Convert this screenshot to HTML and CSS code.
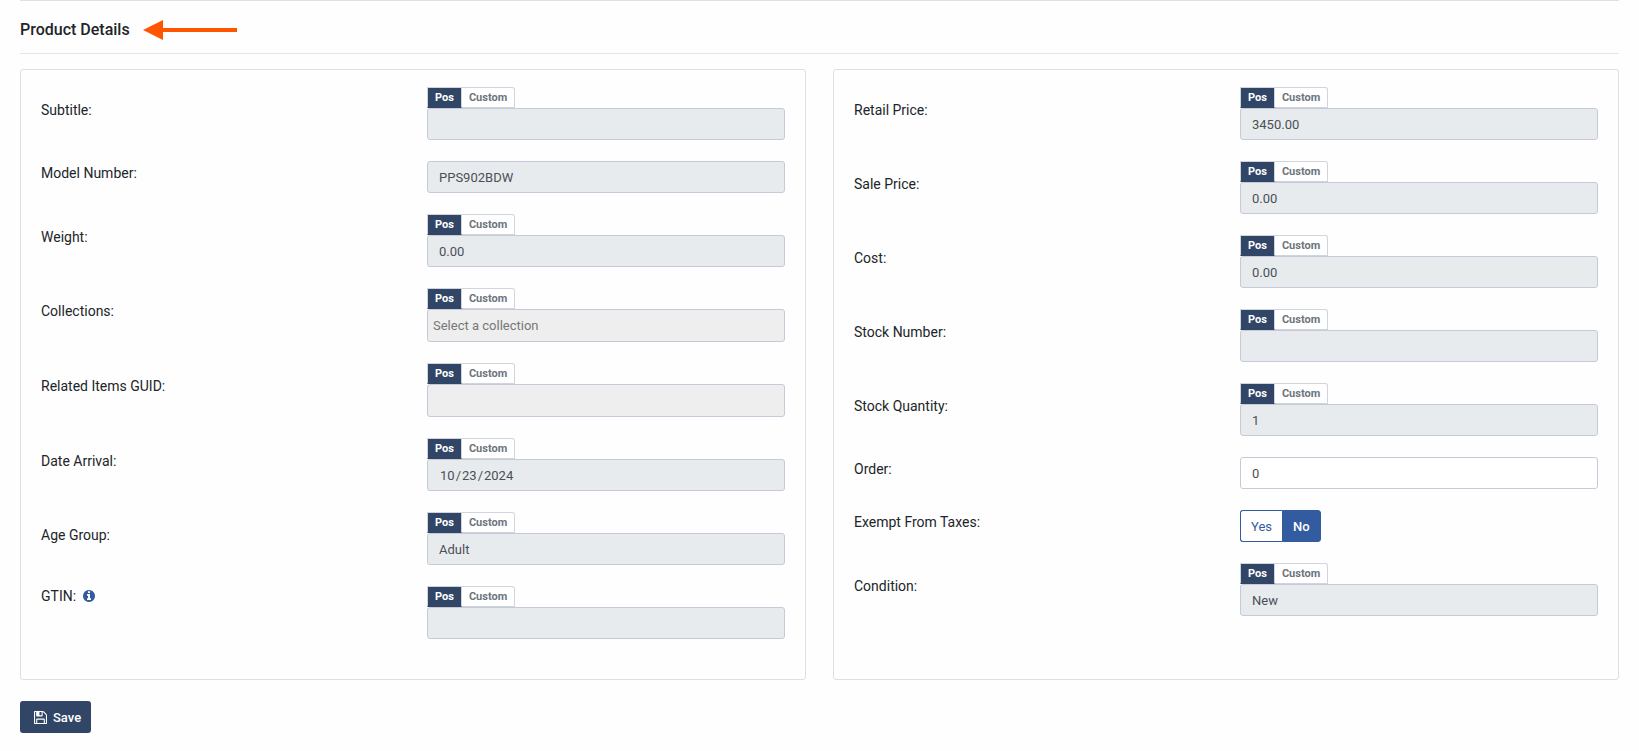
FILE: index.html
```html
<!DOCTYPE html>
<html lang="en-US">
<head>
<meta charset="utf-8">
<meta name="viewport" content="width=device-width, initial-scale=1">
<title>Product Details</title>
<link rel="stylesheet" href="styles.css">
</head>
<body>
<main class="page">
  <header class="section-head">
    <h1 class="section-title">Product Details</h1>
    <svg class="arrow" width="94" height="20" viewBox="0 0 94 20" aria-hidden="true"><path d="M0 10 20 0v8h74v4H20v8z" fill="#ff5500"/></svg>
  </header>

  <form class="details">
    <div class="columns">
      <section class="card">
        <div class="field">
          <label class="label" for="subtitle">Subtitle:</label>
          <div class="control">
            <div class="source"><button type="button" class="tab tab-on">Pos</button><button type="button" class="tab">Custom</button></div>
            <input class="input" id="subtitle" type="text" readonly>
          </div>
        </div>
        <div class="field">
          <label class="label" for="model">Model Number:</label>
          <div class="control">
            <input class="input" id="model" type="text" value="PPS902BDW" readonly>
          </div>
        </div>
        <div class="field">
          <label class="label" for="weight">Weight:</label>
          <div class="control">
            <div class="source"><button type="button" class="tab tab-on">Pos</button><button type="button" class="tab">Custom</button></div>
            <input class="input" id="weight" type="text" value="0.00" readonly>
          </div>
        </div>
        <div class="field">
          <label class="label" for="collections">Collections:</label>
          <div class="control">
            <div class="source"><button type="button" class="tab tab-on">Pos</button><button type="button" class="tab">Custom</button></div>
            <input class="input input-picker" id="collections" type="text" placeholder="Select a collection" readonly>
          </div>
        </div>
        <div class="field">
          <label class="label" for="related">Related Items GUID:</label>
          <div class="control">
            <div class="source"><button type="button" class="tab tab-on">Pos</button><button type="button" class="tab">Custom</button></div>
            <input class="input input-picker" id="related" type="text" readonly>
          </div>
        </div>
        <div class="field">
          <label class="label" for="arrival">Date Arrival:</label>
          <div class="control">
            <div class="source"><button type="button" class="tab tab-on">Pos</button><button type="button" class="tab">Custom</button></div>
            <input class="input" id="arrival" type="date" value="2024-10-23" readonly>
          </div>
        </div>
        <div class="field">
          <label class="label" for="age">Age Group:</label>
          <div class="control">
            <div class="source"><button type="button" class="tab tab-on">Pos</button><button type="button" class="tab">Custom</button></div>
            <input class="input" id="age" type="text" value="Adult" readonly>
          </div>
        </div>
        <div class="field field-top">
          <label class="label" for="gtin">GTIN:
            <svg class="info" width="12" height="12" viewBox="128 128 1536 1536" aria-hidden="true"><path fill="currentColor" d="M1152 1376v-160q0-14-9-23t-23-9h-96v-512q0-14-9-23t-23-9h-320q-14 0-23 9t-9 23v160q0 14 9 23t23 9h96v320h-96q-14 0-23 9t-9 23v160q0 14 9 23t23 9h448q14 0 23-9t9-23zm-128-896v-160q0-14-9-23t-23-9h-192q-14 0-23 9t-9 23v160q0 14 9 23t23 9h192q14 0 23-9t9-23zm640 416q0 209-103 385.5t-279.5 279.5-385.5 103-385.5-103-279.5-279.5-103-385.5 103-385.5 279.5-279.5 385.5-103 385.5 103 279.5 279.5 103 385.5z"/></svg>
          </label>
          <div class="control">
            <div class="source"><button type="button" class="tab tab-on">Pos</button><button type="button" class="tab">Custom</button></div>
            <input class="input" id="gtin" type="text" readonly>
          </div>
        </div>
      </section>

      <section class="card">
        <div class="field">
          <label class="label" for="retail">Retail Price:</label>
          <div class="control">
            <div class="source"><button type="button" class="tab tab-on">Pos</button><button type="button" class="tab">Custom</button></div>
            <input class="input" id="retail" type="text" value="3450.00" readonly>
          </div>
        </div>
        <div class="field">
          <label class="label" for="sale">Sale Price:</label>
          <div class="control">
            <div class="source"><button type="button" class="tab tab-on">Pos</button><button type="button" class="tab">Custom</button></div>
            <input class="input" id="sale" type="text" value="0.00" readonly>
          </div>
        </div>
        <div class="field">
          <label class="label" for="cost">Cost:</label>
          <div class="control">
            <div class="source"><button type="button" class="tab tab-on">Pos</button><button type="button" class="tab">Custom</button></div>
            <input class="input" id="cost" type="text" value="0.00" readonly>
          </div>
        </div>
        <div class="field">
          <label class="label" for="stock-number">Stock Number:</label>
          <div class="control">
            <div class="source"><button type="button" class="tab tab-on">Pos</button><button type="button" class="tab">Custom</button></div>
            <input class="input" id="stock-number" type="text" readonly>
          </div>
        </div>
        <div class="field">
          <label class="label" for="stock-quantity">Stock Quantity:</label>
          <div class="control">
            <div class="source"><button type="button" class="tab tab-on">Pos</button><button type="button" class="tab">Custom</button></div>
            <input class="input" id="stock-quantity" type="text" value="1" readonly>
          </div>
        </div>
        <div class="field">
          <label class="label" for="order">Order:</label>
          <div class="control">
            <input class="input input-open" id="order" type="text" value="0">
          </div>
        </div>
        <div class="field">
          <span class="label" id="exempt-label">Exempt From Taxes:</span>
          <div class="control">
            <div class="switch" role="group" aria-labelledby="exempt-label"><button type="button" class="choice">Yes</button><button type="button" class="choice choice-on">No</button></div>
          </div>
        </div>
        <div class="field">
          <label class="label" for="condition">Condition:</label>
          <div class="control">
            <div class="source"><button type="button" class="tab tab-on">Pos</button><button type="button" class="tab">Custom</button></div>
            <input class="input" id="condition" type="text" value="New" readonly>
          </div>
        </div>
      </section>
    </div>

    <button type="submit" class="save">
      <svg width="13" height="13" viewBox="128 128 1536 1536" aria-hidden="true"><path fill="currentColor" d="M512 1536h768v-384h-768v384zm896 0h128v-896q0-14-10-38.5t-20-34.5l-281-281q-10-10-34-20t-39-10v416q0 40-28 68t-68 28h-576q-40 0-68-28t-28-68v-416h-128v1280h128v-416q0-40 28-68t68-28h832q40 0 68 28t28 68v416zm-384-928v-320q0-13-9.5-22.5t-22.5-9.5h-192q-13 0-22.5 9.5t-9.5 22.5v320q0 13 9.5 22.5t22.5 9.5h192q13 0 22.5-9.5t9.5-22.5zm640 32v928q0 40-28 68t-68 28h-1344q-40 0-68-28t-28-68v-1344q0-40 28-68t68-28h928q40 0 88 20t76 48l280 280q28 28 48 76t20 88z"/></svg>
      Save
    </button>
  </form>
</main>
</body>
</html>
```
FILE: styles.css
```css
* {
  box-sizing: border-box;
}

body {
  margin: 0;
  background: #fefefe;
  color: #212529;
  font-family: Roboto, "Liberation Sans", sans-serif;
  font-size: 14px;
  line-height: 20px;
}

button,
input {
  margin: 0;
  font-family: inherit;
}

.page {
  padding: 0 20px 16px;
}

.section-head {
  display: flex;
  align-items: center;
  gap: 13px;
  padding: 18px 0 13px;
  border-top: 1px solid #dee2e6;
  border-bottom: 1px solid #e4e5e7;
}

.section-title {
  margin: 0;
  font-size: 16px;
  font-weight: 500;
  line-height: 21px;
}

.columns {
  display: grid;
  grid-template-columns: 1fr 1fr;
  gap: 27px;
  margin: 15px 0 21px;
}

.card {
  display: flex;
  flex-direction: column;
  gap: 21px;
  padding: 17px 20px 40px;
  border: 1px solid #dddfe1;
  border-radius: 3px;
}

.field {
  display: grid;
  grid-template-columns: 1fr 1fr;
  gap: 28px;
  align-items: center;
}

.field-top {
  align-items: start;
}

.label {
  padding-bottom: 8px;
}

.info {
  margin-left: 3px;
  color: #325c9f;
  vertical-align: -1px;
}

.source {
  display: flex;
  height: 21px;
}

.tab {
  padding: 0 7px;
  border: 1px solid #d0d4dc;
  border-left-width: 0;
  border-radius: 0 3px 0 0;
  background: #ffffff;
  color: #6c757d;
  font-size: 11px;
  font-weight: 700;
  line-height: 18px;
}

.tab-on {
  border-left-width: 1px;
  border-bottom-color: #314667;
  border-radius: 0;
  background: #314667;
  color: #ffffff;
}

.input {
  display: block;
  width: 100%;
  height: 32px;
  padding: 0 11px;
  border: 1px solid #c6cad8;
  border-radius: 3px;
  outline: 0;
  background: #e8ebee;
  color: #495057;
  font-size: 13px;
}

.input::-webkit-calendar-picker-indicator {
  display: none;
}

.input-picker {
  height: 33px;
  padding: 0 5px;
  background: #eeeeee;
}

.input-picker::placeholder {
  color: #777777;
}

.input-open {
  background: #ffffff;
}

.switch {
  display: flex;
}

.choice {
  height: 32px;
  padding: 0 10px;
  border: 1px solid #325c9f;
  border-right-width: 0;
  border-radius: 3px 0 0 3px;
  background: #ffffff;
  color: #325c9f;
  font-size: 13px;
}

.choice-on {
  border-right-width: 1px;
  border-radius: 0 3px 3px 0;
  background: #325c9f;
  color: #ffffff;
  font-weight: 500;
}

.save {
  display: flex;
  align-items: center;
  gap: 6px;
  height: 32px;
  padding: 0 10px 0 14px;
  border: 0;
  border-radius: 3px;
  background: #314667;
  color: #ffffff;
  font-size: 13px;
  font-weight: 500;
}
```
